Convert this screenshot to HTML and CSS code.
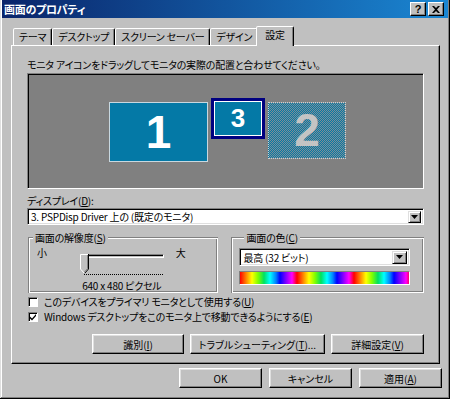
FILE: index.html
```html
<!DOCTYPE html>
<html lang="ja">
<head>
    <meta charset="UTF-8">
    <title>画面のプロパティ</title>
    <link rel="stylesheet" href="styles.css">
</head>
<body>
    <div class="window">
        <div class="titlebar">
            <span class="title">画面のプロパティ</span>
            <div class="title-btns">
                <span class="tbtn help">?</span>
                <span class="tbtn">
                    <svg width="8" height="7" viewBox="0 0 8 7"><path d="M0 0h2l2 2 2-2h2L5 3.5 8 7H6L4 5 2 7H0l3-3.5z" fill="#000"/></svg>
                </span>
            </div>
        </div>

        <div class="tabs">
            <div class="tab">テーマ</div>
            <div class="tab">デスクトップ</div>
            <div class="tab">スクリーン セーバー</div>
            <div class="tab">デザイン</div>
            <div class="tab active">設定</div>
        </div>

        <div class="panel">
            <p class="hint">モニタ アイコンをドラッグしてモニタの実際の配置と合わせてください。</p>

            <div class="arrange">
                <div class="mon mon1">1</div>
                <div class="mon mon3">3</div>
                <div class="mon mon2">2</div>
            </div>

            <div class="lbl">ディスプレイ(<u>D</u>):</div>
            <div class="combo combo-display">
                <span class="combo-text">3. PSPDisp Driver 上の (既定のモニタ)</span>
                <span class="combo-btn"><svg width="7" height="4" viewBox="0 0 7 4"><path d="M0 0h7L3.5 4z" fill="#000"/></svg></span>
            </div>

            <div class="groups">
                <div class="group group-res">
                    <span class="legend">画面の解像度(<u>S</u>)</span>
                    <div class="res-row">
                        <span class="res-min">小</span>
                        <div class="res-col">
                            <div class="slider">
                                <div class="track"></div>
                                <svg class="thumb" width="9" height="20" viewBox="0 0 9 20">
                                    <path d="M0 0h9v15l-4.5 5L0 15z" fill="#c0c0c0"/>
                                    <path d="M0.5 15V0.5H8" fill="none" stroke="#fff"/>
                                    <path d="M8.5 0v15l-4 4.5" fill="none" stroke="#000"/>
                                    <path d="M7.5 1v13.6l-3.3 3.7" fill="none" stroke="#808080"/>
                                    <path d="M0.5 15l4 4.5" fill="none" stroke="#fff"/>
                                </svg>
                            </div>
                            <div class="ticks"></div>
                            <div class="res-text">640 x 480 ピクセル</div>
                        </div>
                        <span class="res-max">大</span>
                    </div>
                </div>
                <div class="group group-color">
                    <span class="legend">画面の色(<u>C</u>)</span>
                    <div class="combo combo-color">
                        <span class="combo-text">最高 (32 ビット)</span>
                        <span class="combo-btn"><svg width="7" height="4" viewBox="0 0 7 4"><path d="M0 0h7L3.5 4z" fill="#000"/></svg></span>
                    </div>
                    <div class="spectrum"></div>
                </div>
            </div>

            <div class="check"><span class="box"></span>このデバイスをプライマリ モニタとして使用する(<u>U</u>)</div>
            <div class="check">
                <span class="box"><svg width="8" height="8" viewBox="0 0 8 8"><path d="M1 3.5l2 2 4-4.5v2l-4 4.5-2-2z" fill="#000"/></svg></span>
                Windows デスクトップをこのモニタ上で移動できるようにする(<u>E</u>)
            </div>

            <div class="panel-btns">
                <button class="btn btn-ident">識別(<u>I</u>)</button>
                <button class="btn btn-trouble">トラブルシューティング(<u>T</u>)...</button>
                <button class="btn btn-adv">詳細設定(<u>V</u>)</button>
            </div>
        </div>

        <div class="dialog-btns">
            <button class="btn btn-dlg">OK</button>
            <button class="btn btn-dlg">キャンセル</button>
            <button class="btn btn-dlg">適用(<u>A</u>)</button>
        </div>
    </div>
</body>
</html>
```

FILE: styles.css
```css
/* Classic Windows dialog */
:root {
    --face: #c0c0c0;
    --light: #dfdfdf;
    --shadow: #808080;
    --dark: #000;
    --monitor: #0479a6;
}

body {
    margin: 0;
    font-family: "Noto Sans CJK JP", sans-serif;
    font-size: 10px;
    line-height: 13px;
    letter-spacing: -0.2px;
    font-feature-settings: "palt";
    color: #000;
}

u {
    text-decoration-thickness: 1px;
    text-underline-offset: 1px;
}

.window {
    width: 450px;
    height: 399px;
    box-sizing: border-box;
    padding: 0 2px 2px 2px;
    background: var(--face);
    box-shadow: inset -1px -1px var(--dark), inset 1px 0 var(--light),
                inset -2px -2px var(--shadow), inset 2px 0 #fff;
}

/* Title bar */
.titlebar {
    height: 18px;
    display: flex;
    align-items: center;
    justify-content: space-between;
    padding: 0 4px 0 2px;
    background: linear-gradient(to right, #0a246a, #1a86d2);
}

.title {
    color: #fff;
    font-weight: bold;
    font-size: 11px;
    letter-spacing: -0.3px;
}

.title-btns {
    display: flex;
    gap: 2px;
}

.tbtn {
    width: 14px;
    height: 12px;
    display: flex;
    align-items: center;
    justify-content: center;
    background: var(--face);
    border: 1px solid;
    border-color: #fff var(--dark) var(--dark) #fff;
    box-shadow: inset -1px -1px var(--shadow);
    font: bold 11px "Liberation Sans", sans-serif;
}

/* Tabs */
.tabs {
    display: flex;
    align-items: flex-end;
    height: 19px;
    margin: 8px 0 0 9px;
    padding-left: 2px;
    position: relative;
    z-index: 1;
}

.tab {
    height: 16px;
    padding: 0 5px;
    border: 1px solid;
    border-bottom: none;
    border-color: #fff var(--dark) transparent #fff;
    border-radius: 2px 2px 0 0;
    box-shadow: inset -1px 0 var(--shadow);
    background: var(--face);
    line-height: 15px;
    white-space: nowrap;
}

.tab.active {
    height: 19px;
    margin: 0 -2px -1px;
    padding: 0 8px;
    line-height: 16px;
    position: relative;
}

/* Property page */
.panel {
    margin: 0 8px 0 9px;
    height: 319px;
    box-sizing: border-box;
    padding: 12px 15px 0 15px;
    border: 1px solid;
    border-color: #fff var(--dark) var(--dark) #fff;
    box-shadow: inset -1px -1px var(--shadow);
}

.hint {
    margin: 0;
    white-space: nowrap;
}

.arrange {
    position: relative;
    height: 116px;
    margin-top: 2px;
    box-sizing: border-box;
    background: var(--shadow);
    border: 1px solid;
    border-color: var(--shadow) #fff #fff var(--shadow);
    box-shadow: inset 1px 1px var(--dark);
}

.mon {
    position: absolute;
    box-sizing: border-box;
    display: flex;
    align-items: center;
    justify-content: center;
    font-family: "Liberation Sans", sans-serif;
    font-weight: bold;
    letter-spacing: 0;
    color: #fff;
}

.mon1 {
    left: 81px;
    top: 28px;
    width: 99px;
    height: 60px;
    background: var(--monitor);
    border: 1px solid #c8d8e0;
    font-size: 46px;
}

.mon3 {
    left: 183px;
    top: 24px;
    width: 54px;
    height: 41px;
    background: var(--monitor);
    border: 3px solid #000080;
    box-shadow: inset 0 0 0 1px #fff;
    font-size: 26px;
}

.mon2 {
    left: 240px;
    top: 28px;
    width: 78px;
    height: 57px;
    background: repeating-conic-gradient(var(--monitor) 0 25%, #7e8e96 0 50%) 0 0 / 2px 2px;
    border: 1px dotted #d0d0d0;
    color: #c4c4c4;
    font-size: 46px;
}

.lbl {
    margin-top: 5px;
}

/* Combo boxes */
.combo {
    display: flex;
    align-items: center;
    box-sizing: border-box;
    background: #fff;
    border: 1px solid;
    border-color: var(--shadow) #fff #fff var(--shadow);
    box-shadow: inset 1px 1px var(--dark), inset -1px -1px var(--light);
    padding: 2px;
}

.combo-display {
    width: 397px;
    height: 17px;
    margin-top: 1px;
}

.combo-text {
    flex: 1;
    padding-left: 1px;
    white-space: nowrap;
}

.combo-btn {
    width: 13px;
    height: 12px;
    box-sizing: border-box;
    display: flex;
    align-items: center;
    justify-content: center;
    background: var(--face);
    border: 1px solid;
    border-color: var(--light) var(--dark) var(--dark) var(--light);
    box-shadow: inset 1px 1px #fff, inset -1px -1px var(--shadow);
}

/* Group boxes */
.groups {
    display: flex;
    gap: 13px;
    margin-top: 12px;
}

.group {
    height: 56px;
    box-sizing: border-box;
    box-shadow: inset 1px 1px var(--shadow), inset 2px 2px #fff,
                inset -1px -1px #fff, inset -2px -2px var(--shadow);
}

.legend {
    display: block;
    width: fit-content;
    margin: -6px 0 0 5px;
    padding: 0 2px;
    background: var(--face);
}

.group-res {
    width: 192px;
    margin-left: 1px;
}

.res-row {
    display: flex;
    padding-left: 9px;
    margin-top: 4px;
}

.res-min {
    margin-top: -2px;
    margin-right: 33px;
}

.res-col {
    width: 84px;
    text-align: center;
}

.slider {
    position: relative;
    height: 20px;
}

.track {
    margin: 6px 0 0 4px;
    height: 2px;
    border: 1px solid;
    border-color: var(--shadow) #fff #fff var(--shadow);
    box-shadow: inset 1px 1px var(--dark);
}

.thumb {
    position: absolute;
    left: 0;
    top: 0;
}

.ticks {
    margin-left: 4px;
    height: 1px;
    background: repeating-linear-gradient(to right, #000 0 1px, transparent 1px 2px);
}

.res-text {
    margin: 4px -12px 0;
    white-space: nowrap;
}

.res-max {
    margin: -2px 0 0 12px;
}

.group-color {
    width: 194px;
    padding-left: 8px;
}

.combo-color {
    width: 171px;
    height: 18px;
    margin-top: 4px;
}

.combo-color .combo-btn {
    height: 13px;
    width: 15px;
}

.spectrum {
    width: 171px;
    height: 14px;
    margin-top: 5px;
    box-sizing: border-box;
    border: 1px solid;
    border-color: var(--shadow) #fff #fff var(--shadow);
    background: repeating-linear-gradient(to right,
        #ff0000 0, #ff8000 6px, #ffff00 12px, #80ff00 18px, #00e060 24px,
        #00ffff 30px, #0080ff 36px, #0000ff 40px, #8000ff 46px, #ff00ff 52px, #ff0000 57px);
}

/* Checkboxes */
.check {
    display: flex;
    align-items: center;
    height: 15px;
    white-space: nowrap;
}

.groups + .check {
    margin-top: 1px;
}

.box {
    width: 10px;
    height: 10px;
    box-sizing: border-box;
    margin: 0 6px 0 1px;
    display: flex;
    align-items: center;
    justify-content: center;
    background: #fff;
    border: 1px solid;
    border-color: var(--shadow) #fff #fff var(--shadow);
    box-shadow: inset 1px 1px var(--dark);
}

/* Buttons */
.btn {
    height: 20px;
    padding: 0;
    box-sizing: border-box;
    background: var(--face);
    border: 1px solid;
    border-color: #fff var(--dark) var(--dark) #fff;
    box-shadow: inset -1px -1px var(--shadow), inset 1px 1px var(--light);
    font: inherit;
    color: #000;
    white-space: nowrap;
}

.panel-btns {
    display: flex;
    justify-content: flex-end;
    gap: 6px;
    margin-top: 10px;
}

.btn-ident { width: 92px; }
.btn-trouble { width: 135px; }
.btn-adv { width: 93px; }

.dialog-btns {
    display: flex;
    justify-content: flex-end;
    gap: 7px;
    margin: 4px 6px 0 0;
}

.btn-dlg { width: 83px; }
```
